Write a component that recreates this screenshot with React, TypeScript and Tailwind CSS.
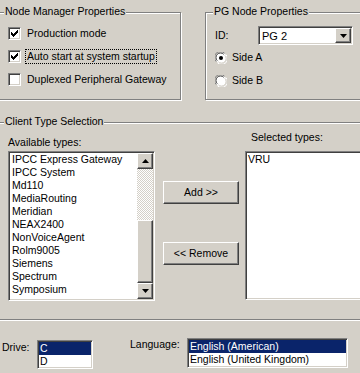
import React from 'react';

const etched = 'border border-[#808080] shadow-[1px_1px_0_#ffffff,inset_1px_1px_0_#ffffff]';
const sunken =
  'border border-t-[#808080] border-l-[#808080] border-r-white border-b-white shadow-[inset_1px_1px_0_#404040,inset_-1px_-1px_0_#d4d0c8]';
const raised =
  'border border-t-white border-l-white border-r-[#404040] border-b-[#404040] shadow-[inset_-1px_-1px_0_#808080]';

const GroupTitle = ({ text, left }: { text: string; left: string }) => (
  <span className={`absolute top-[-8px] ${left} px-[1px] bg-[#d4d0c8] whitespace-nowrap`}>{text}</span>
);

const Check = ({ checked }: { checked: boolean }) => (
  <span className={`w-[13px] h-[13px] shrink-0 bg-white flex items-center justify-center ${sunken}`}>
    {checked && (
      <svg width="7" height="7" viewBox="0 0 7 7">
        <path d="M0 2h1v1h1v1h1v-1h1v-1h1v-1h1v-1h1v3h-1v1h-1v1h-1v1h-1v1h-1v-1h-1v-1h-1z" fill="#000" />
      </svg>
    )}
  </span>
);

const Radio = ({ on }: { on: boolean }) => (
  <svg width="12" height="12" viewBox="0 0 12 12" className="shrink-0">
    <circle cx="6" cy="6" r="5.5" fill="#ffffff" />
    <path d="M1.2 9.5A5.5 5.5 0 0 1 9.5 1.2" stroke="#808080" strokeWidth="1" fill="none" />
    <path d="M2.3 8.7A4.5 4.5 0 0 1 8.7 2.3" stroke="#404040" strokeWidth="1" fill="none" />
    <path d="M10.8 2.5A5.5 5.5 0 0 1 2.5 10.8" stroke="#ffffff" strokeWidth="1" fill="none" />
    <path d="M9.7 3.3A4.5 4.5 0 0 1 3.3 9.7" stroke="#d4d0c8" strokeWidth="1" fill="none" />
    {on && <circle cx="6" cy="6" r="2" fill="#000" />}
  </svg>
);

const Arrow = ({ up }: { up?: boolean }) => (
  <svg width="7" height="4" viewBox="0 0 7 4">
    <path d={up ? 'M3.5 0L7 4H0z' : 'M0 0h7L3.5 4z'} fill="#000" />
  </svg>
);

const available = [
  'IPCC Express Gateway',
  'IPCC System',
  'Md110',
  'MediaRouting',
  'Meridian',
  'NEAX2400',
  'NonVoiceAgent',
  'Rolm9005',
  'Siemens',
  'Spectrum',
  'Symposium',
];

export default function App() {
  return (
    <div className="w-[360px] h-[373px] overflow-hidden bg-[#d4d0c8] text-black text-[10.5px] leading-[13px] font-['Liberation_Sans',Arial,sans-serif]">
      {/* top row */}
      <div className="flex pt-[12px]">
        <div className={`relative ml-[-3px] w-[184px] h-[88px] shrink-0 ${etched}`}>
          <GroupTitle text="Node Manager Properties" left="left-[6px]" />
          <div className="flex flex-col gap-[10px] pt-[14px] pl-[10px]">
            <div className="flex items-center h-[13px] gap-[4px]">
              <Check checked />
              <span className="border border-transparent px-[1px] whitespace-nowrap">Production mode</span>
            </div>
            <div className="flex items-center h-[13px] gap-[4px]">
              <Check checked />
              <span className="border border-dotted border-black px-[1px] whitespace-nowrap">
                Auto start at system startup
              </span>
            </div>
            <div className="flex items-center h-[13px] gap-[4px]">
              <Check checked={false} />
              <span className="border border-transparent px-[1px] whitespace-nowrap">Duplexed Peripheral Gateway</span>
            </div>
          </div>
        </div>

        <div className={`relative ml-[24px] mr-[-4px] flex-1 h-[88px] ${etched}`}>
          <GroupTitle text="PG Node Properties" left="left-[7px]" />
          <div className="flex flex-col pt-[13px] pl-[9px]">
            <div className="flex items-center">
              <span className="w-[43px]">ID:</span>
              <div className={`w-[95px] h-[19px] bg-white flex items-stretch ${sunken}`}>
                <span className="flex-1 pl-[3px] pt-[3px] text-[11px]">PG 2</span>
                <span className={`w-[16px] m-[1px] bg-[#d4d0c8] flex items-center justify-center ${raised}`}>
                  <Arrow />
                </span>
              </div>
            </div>
            <div className="flex items-center h-[13px] gap-[5px] mt-[6px]">
              <Radio on />
              <span>Side A</span>
            </div>
            <div className="flex items-center h-[13px] gap-[5px] mt-[10px]">
              <Radio on={false} />
              <span>Side B</span>
            </div>
          </div>
        </div>
      </div>

      {/* client type selection */}
      <div className={`relative mt-[22px] mx-[-3px] h-[198px] ${etched}`}>
        <GroupTitle text="Client Type Selection" left="left-[6px]" />
        <div className="flex">
          <div className="flex flex-col pl-[10px] pt-[13px]">
            <span className="whitespace-nowrap">Available types:</span>
            <div className={`mt-[2px] w-[147px] h-[150px] bg-white flex ${sunken}`}>
              <div className="flex-1 flex flex-col pt-[1px] pl-[3px] overflow-hidden">
                {available.map((t) => (
                  <span key={t} className="h-[13px] whitespace-nowrap">
                    {t}
                  </span>
                ))}
              </div>
              <div className="w-[16px] m-[1px] flex flex-col">
                <span className={`h-[16px] bg-[#d4d0c8] flex items-center justify-center ${raised}`}>
                  <Arrow up />
                </span>
                <span className="h-[51px] bg-[repeating-conic-gradient(#ffffff_0%_25%,#d4d0c8_0%_50%)] bg-[length:2px_2px]" />
                <span className={`flex-1 bg-[#d4d0c8] ${raised}`} />
                <span className={`h-[16px] bg-[#d4d0c8] flex items-center justify-center ${raised}`}>
                  <Arrow />
                </span>
              </div>
            </div>
          </div>

          <div className="flex flex-col ml-[8px] pt-[58px]">
            <button className={`w-[76px] h-[23px] bg-[#d4d0c8] ${raised}`}>Add &gt;&gt;</button>
            <button className={`w-[76px] h-[23px] bg-[#d4d0c8] mt-[38px] ${raised}`}>&lt;&lt; Remove</button>
          </div>

          <div className="flex flex-col flex-1 ml-[6px] mr-[-8px] pt-[8px]">
            <span className="ml-[6px] whitespace-nowrap">Selected types:</span>
            <div className={`mt-[7px] h-[149px] bg-white ${sunken}`}>
              <div className="pt-[1px] pl-[2px]">VRU</div>
            </div>
          </div>
        </div>
      </div>

      {/* drive / language */}
      <div className="flex items-start">
        <span className="w-[37px] pl-[2px] mt-[21px]">Drive:</span>
        <div className={`w-[56px] h-[29px] mt-[20px] bg-white p-[1px] ${sunken}`}>
          <div className="h-[13px] bg-[#0a246a] text-white pl-[1px]">C</div>
          <div className="h-[13px] pl-[1px]">D</div>
        </div>
        <span className="ml-[37px] w-[57px] mt-[18px]">Language:</span>
        <div className={`w-[161px] h-[30px] mt-[18px] bg-white p-[1px] ${sunken}`}>
          <div className="h-[13px] bg-[#0a246a] text-white pl-[1px] whitespace-nowrap">English (American)</div>
          <div className="h-[13px] pl-[1px] whitespace-nowrap">English (United Kingdom)</div>
        </div>
      </div>
    </div>
  );
}
